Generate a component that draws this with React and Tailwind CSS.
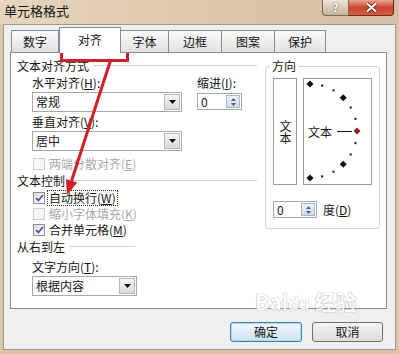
const TABS = [
  { label: "数字", w: "w-[48px]" },
  { label: "对齐", w: "w-[62px]", active: true },
  { label: "字体", w: "w-[49px]" },
  { label: "边框", w: "w-[54px]" },
  { label: "图案", w: "w-[54px]" },
  { label: "保护", w: "w-[52px]" },
];

function Key({ k }) {
  return (
    <>
      (<span className="underline">{k}</span>)
    </>
  );
}

function Legend({ children, line = "flex-1" }) {
  return (
    <div className="flex h-[14px] items-center">
      <span className="leading-[14px]">{children}</span>
      <span className={`ml-[4px] flex flex-col ${line}`}>
        <span className="h-px bg-[#d5d5d5]" />
        <span className="h-px bg-white" />
      </span>
    </div>
  );
}

function Select({ value, width }) {
  return (
    <div className={`flex h-[20px] items-center border border-[#a3a9b1] bg-white ${width}`}>
      <span className="flex-1 pl-[3px] leading-[14px]">{value}</span>
      <span className="mr-px flex h-[16px] w-[16px] items-center justify-center border border-[#b4b8be] bg-gradient-to-b from-[#f6f6f6] to-[#d9d9d9]">
        <svg width="7" height="4" viewBox="0 0 7 4">
          <path d="M0 0h7L3.5 4z" fill="#111" />
        </svg>
      </span>
    </div>
  );
}

function Spin({ width }) {
  return (
    <div className={`flex h-[17px] items-center border border-[#a3a9b1] bg-white ${width}`}>
      <span className="flex-1 pl-[3px] leading-[14px]">0</span>
      <span className="mr-px flex h-[13px] w-[14px] flex-col items-center justify-center gap-[2px] border border-[#a9b7c9] bg-gradient-to-b from-[#eef3f9] to-[#cfdbe9]">
        <svg width="5" height="3" viewBox="0 0 5 3">
          <path d="M0 3h5L2.5 0z" fill="#4d6185" />
        </svg>
        <svg width="5" height="3" viewBox="0 0 5 3">
          <path d="M0 0h5L2.5 3z" fill="#4d6185" />
        </svg>
      </span>
    </div>
  );
}

function Check({ checked, disabled, focus, children }) {
  return (
    <div className="flex h-[16px] items-center pl-[16px]">
      <span
        className={`flex h-[12px] w-[12px] items-center justify-center border ${
          disabled ? "border-[#cfcfcf] bg-[#f7f7f7]" : "border-[#8e8f8f] bg-gradient-to-br from-[#dcdcdc] to-white"
        }`}
      >
        {checked && (
          <svg width="9" height="8" viewBox="0 0 9 8">
            <path d="M1 4l2.3 2.5L8 1" fill="none" stroke="#3c5a9a" strokeWidth="1.8" />
          </svg>
        )}
      </span>
      <span
        className={`ml-[3px] px-px leading-[14px] ${disabled ? "text-[#a8a8a8]" : ""} ${
          focus ? "outline-1 outline-dotted outline-[#333]" : ""
        }`}
      >
        {children}
      </span>
    </div>
  );
}

function Dial() {
  const cx = 6;
  const cy = 52;
  const r = 47;
  const marks = [];
  for (let a = 90; a >= -90; a -= 15) {
    const rad = (a * Math.PI) / 180;
    const x = cx + r * Math.cos(rad);
    const y = cy - r * Math.sin(rad);
    if (a % 45 === 0) {
      const c = a === 0 ? "#8a1f2c" : "#111";
      marks.push(
        <path key={a} d={`M${x} ${y - 3.5}L${x + 3.5} ${y}L${x} ${y + 3.5}L${x - 3.5} ${y}z`} fill={c} />
      );
    } else {
      marks.push(<rect key={a} x={x - 1} y={y - 1} width="2" height="2" fill="#111" />);
    }
  }
  return (
    <svg className="pointer-events-none absolute inset-0" width="67" height="105" viewBox="0 0 67 105">
      {marks}
    </svg>
  );
}

export default function App() {
  return (
    <div className="relative h-[354px] w-[399px] overflow-hidden bg-[#d9c4a6] font-['Noto_Sans_CJK_SC','Noto_Sans',sans-serif] text-[12px] text-[#151515]">
      {/* title bar */}
      <div className="flex h-[24px] items-start justify-between bg-gradient-to-r from-[#e6d5be] via-[#dcc8ac] to-[#d3c0a6]">
        <span className="ml-[4px] mt-[4px] leading-[14px] text-[13px]">单元格格式</span>
        <div className="mr-[5px] flex">
          <span className="flex h-[16px] w-[27px] items-center justify-center rounded-bl-[4px] border border-t-0 border-[#7a6a58] bg-gradient-to-b from-[#efe4d6] to-[#c5b29a] text-[11px] font-bold leading-none text-white [text-shadow:0_0_2px_#4a3a2a]">
            ?
          </span>
          <span className="flex h-[16px] w-[45px] items-center justify-center rounded-br-[4px] border border-l-0 border-t-0 border-[#6e2a1e] bg-gradient-to-b from-[#e7a48f] via-[#c8442c] to-[#d4623f]">
            <svg width="13" height="11" viewBox="0 0 13 11">
              <path d="M2 1.5l9 8M11 1.5l-9 8" stroke="#5a1d12" strokeWidth="3.6" />
              <path d="M2 1.5l9 8M11 1.5l-9 8" stroke="#fff" strokeWidth="2" />
            </svg>
          </span>
        </div>
      </div>

      {/* client area */}
      <div className="ml-[3px] flex h-[326px] w-[393px] flex-col border border-[#a3978a] bg-[#efefef] pt-[2px]">
        <div className="relative z-10 -mb-px flex h-[26px] items-end pl-[7px]">
          {TABS.map((t) =>
            t.active ? (
              <div
                key={t.label}
                className={`flex h-[26px] items-center justify-center border border-b-0 border-[#898c95] bg-white pb-[2px] ${t.w}`}
              >
                {t.label}
              </div>
            ) : (
              <div
                key={t.label}
                className={`-ml-px flex h-[23px] items-center justify-center border border-[#898c95] bg-gradient-to-b from-[#fafafa] to-[#e2e2e2] first:ml-0 ${t.w}`}
              >
                {t.label}
              </div>
            )
          )}
        </div>

        {/* tab panel */}
        <div className="ml-[6px] flex h-[257px] w-[377px] border border-[#898c95] bg-white pl-[6px] pt-[6px]">
          <div className="flex w-[240px] flex-col">
            <Legend>文本对齐方式</Legend>
            <div className="flex">
              <div className="ml-[15px] flex w-[165px] flex-col">
                <span className="mt-[3px] leading-[14px]">
                  水平对齐<Key k="H" />:
                </span>
                <div className="mt-[2px]">
                  <Select value="常规" width="w-[150px]" />
                </div>
                <span className="mt-[3px] leading-[14px]">
                  垂直对齐<Key k="V" />:
                </span>
                <div className="mt-[2px]">
                  <Select value="居中" width="w-[150px]" />
                </div>
              </div>
              <div className="flex flex-col">
                <span className="mt-[3px] leading-[14px]">
                  缩进<Key k="I" />:
                </span>
                <div className="mt-[3px]">
                  <Spin width="w-[45px]" />
                </div>
              </div>
            </div>
            <div className="mt-[5px]">
              <Check disabled>
                两端分散对齐<Key k="E" />
              </Check>
            </div>
            <div className="mt-[2px]">
              <Legend>文本控制</Legend>
            </div>
            <div className="mt-[2px] flex flex-col">
              <Check checked focus>
                自动换行<Key k="W" />
              </Check>
              <Check disabled>
                缩小字体填充<Key k="K" />
              </Check>
              <Check checked>
                合并单元格<Key k="M" />
              </Check>
            </div>
            <div className="mt-[2px]">
              <Legend line="w-[66px]">从右到左</Legend>
            </div>
            <span className="ml-[15px] mt-[6px] leading-[14px]">
              文字方向<Key k="T" />:
            </span>
            <div className="ml-[15px] mt-[2px]">
              <Select value="根据内容" width="w-[105px]" />
            </div>
          </div>

          <fieldset className="ml-[8px] h-[170px] w-[115px] rounded-[3px] border border-[#d3d3d3] px-[7px]">
            <legend className="ml-[-3px] px-[2px] leading-[14px]">方向</legend>
            <div className="mt-[5px] flex gap-[6px]">
              <div className="flex h-[107px] w-[24px] items-center justify-center border border-[#9a9a9a]">
                <span className="leading-[14px] [writing-mode:vertical-rl] [text-orientation:upright]">文本</span>
              </div>
              <div className="relative flex h-[107px] w-[69px] items-center border border-[#9a9a9a] pl-[4px]">
                <span className="leading-[14px]">文本</span>
                <span className="ml-[5px] h-px w-[15px] bg-[#111]" />
                <Dial />
              </div>
            </div>
            <div className="mt-[16px] flex items-center">
              <Spin width="w-[44px]" />
              <span className="ml-[6px] leading-[14px]">
                度<Key k="D" />
              </span>
            </div>
          </fieldset>
        </div>

        {/* buttons */}
        <div className="mt-[13px] flex justify-end gap-[10px] pr-[12px]">
          <button className="h-[20px] w-[72px] rounded-[3px] border border-[#3c7fb1] bg-gradient-to-b from-[#f2f8fc] to-[#cfe3f1] leading-[14px] shadow-[inset_0_0_0_1px_#a9dcf6]">
            确定
          </button>
          <button className="h-[20px] w-[71px] rounded-[3px] border border-[#707070] bg-gradient-to-b from-[#f4f4f4] to-[#dcdcdc] leading-[14px]">
            取消
          </button>
        </div>
      </div>

      {/* watermark */}
      <div className="pointer-events-none absolute left-[255px] top-[290px] opacity-80">
        <span className="text-[21px] font-bold leading-[22px] text-white [text-shadow:0_0_1px_#9a9a9a,0_0_1px_#9a9a9a]">
          Bai<span className="text-[17px]">du</span> 经验
        </span>
      </div>

      {/* red annotation */}
      <svg className="pointer-events-none absolute inset-0" width="399" height="354" viewBox="0 0 399 354">
        <rect x="61.5" y="36.5" width="66" height="24" fill="none" stroke="#cf1f2b" strokeWidth="3" />
        <path d="M111 59L71.6 180.7" stroke="#cf1f2b" strokeWidth="3" />
        <path d="M67 195L77.3 182.5L65.9 178.9z" fill="#cf1f2b" />
      </svg>
    </div>
  );
}
